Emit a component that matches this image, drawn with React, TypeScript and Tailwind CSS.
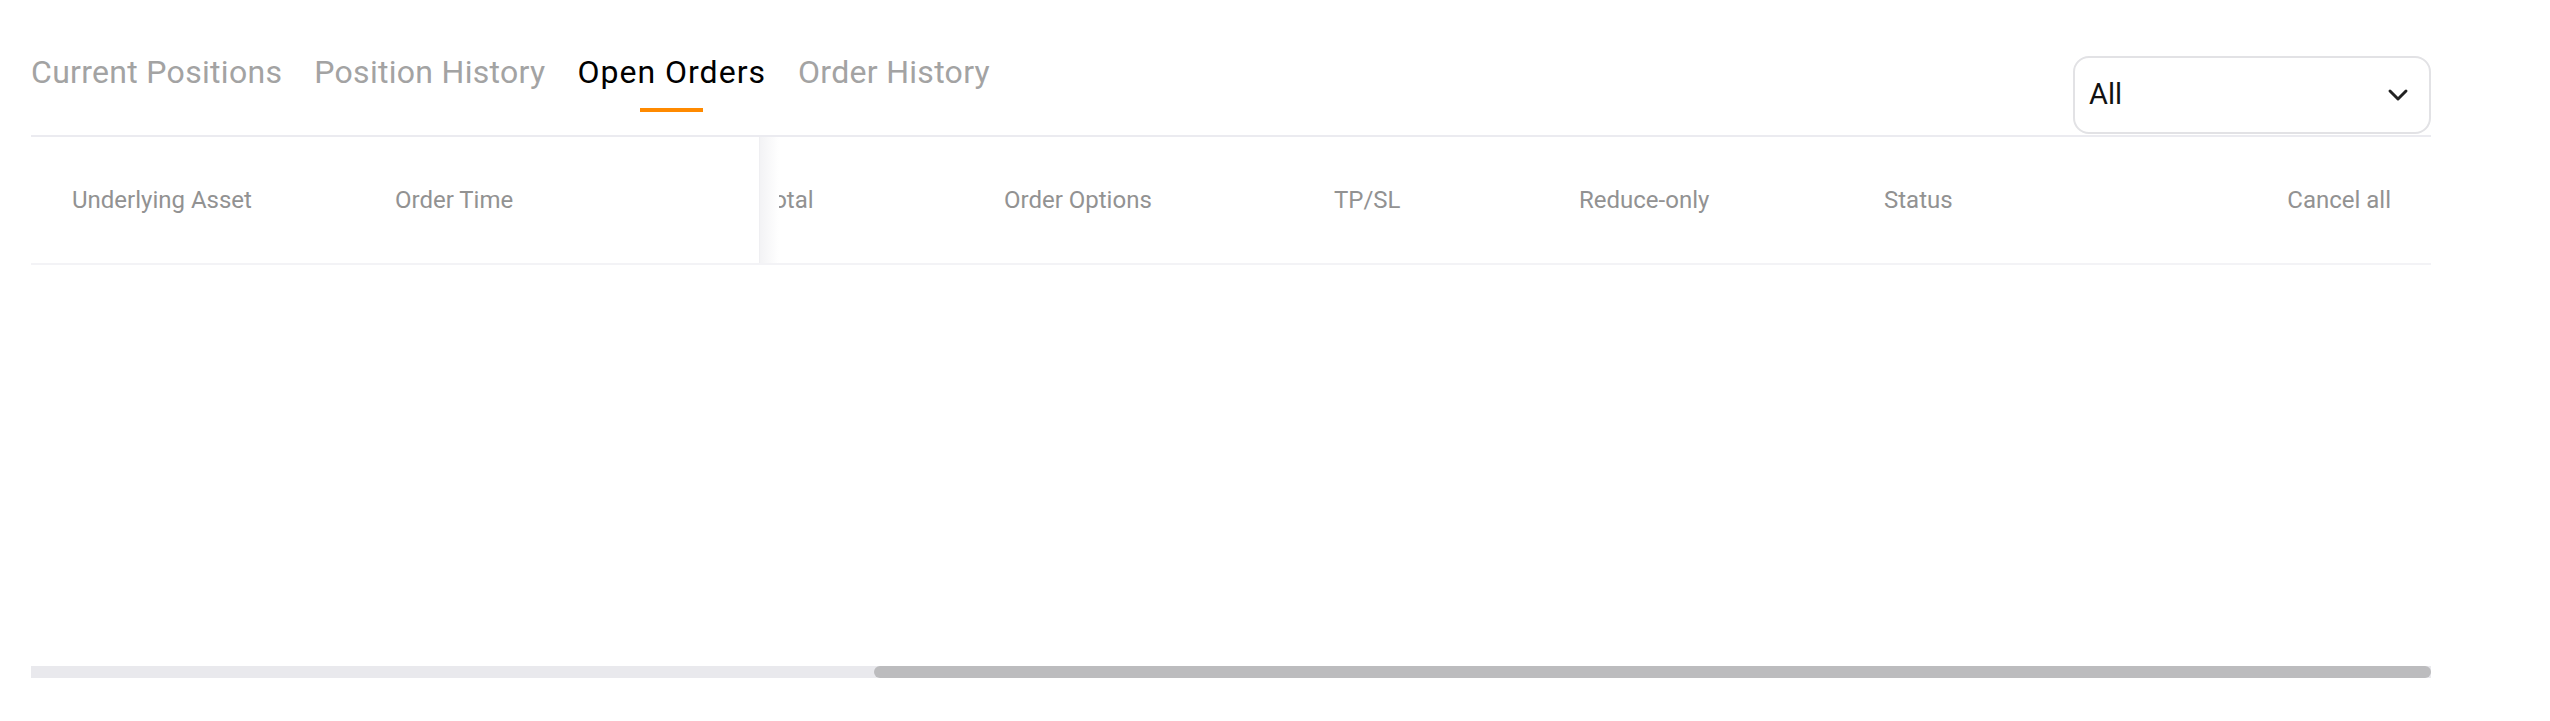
import React from 'react';
import { ChevronDown } from 'lucide-react';

const tabs = ['Current Positions', 'Position History', 'Open Orders', 'Order History'];

// scrolled part of the header, widths are column widths (text start to next text start)
const scrollCols = [
  { label: 'Total', w: 'w-[244px]' },
  { label: 'Order Options', w: 'w-[330px]' },
  { label: 'TP/SL', w: 'w-[245px]' },
  { label: 'Reduce-only', w: 'w-[305px]' },
];

export default function App() {
  const active = 'Open Orders';

  return (
    <div className="w-[2550px] h-[721px] bg-white overflow-hidden" style={{ fontFamily: 'Roboto, "Noto Sans", sans-serif' }}>
      <div className="ml-[31px] w-[2400px] flex flex-col">
        {/* Tabs + filter */}
        <div className="h-[135px] flex justify-between">
          <div className="flex gap-[32px] pt-[52px]">
            {tabs.map((tab) => {
              const isActive = tab === active;
              return (
                <div key={tab} className="flex flex-col items-center">
                  <span
                    className={`text-[32px] leading-[40px] ${
                      isActive ? 'text-black tracking-[1px]' : 'text-[#a3a3a3] tracking-[0.3px]'
                    }`}
                  >
                    {tab}
                  </span>
                  {isActive && <span className="mt-[16px] w-[63px] h-[4px] bg-[#ff8a00]" />}
                </div>
              );
            })}
          </div>
          <div className="self-end mb-[1px] w-[358px] h-[78px] border-2 border-[#e2e2e5] rounded-[16px] flex items-center justify-between pl-[14px] pr-[15px]">
            <span className="text-[29px] text-[#111]">All</span>
            <ChevronDown size={32} strokeWidth={2.2} className="text-[#222]" />
          </div>
        </div>
        <div className="h-[2px] bg-[#ebebf0]" />

        {/* Header row */}
        <div className="h-[128px] border-b-2 border-[#f3f3f6] flex text-[24px] text-[#929292]">
          <div className="w-[748px] shrink-0 flex items-center">
            <div className="w-[728px] h-full flex items-center pl-[41px]">
              <span className="w-[323px]">Underlying Asset</span>
              <span>Order Time</span>
            </div>
            <div className="w-[20px] h-full border-l border-[#efeff2] bg-gradient-to-r from-[#f3f3f5] to-white" />
          </div>
          <div className="flex-1 overflow-hidden flex items-center">
            <div className="flex items-center -ml-[19px] flex-1">
              {scrollCols.map((c) => (
                <span key={c.label} className={`${c.w} shrink-0`}>
                  {c.label}
                </span>
              ))}
              <span className="flex-1">Status</span>
              <span className="pr-[40px]">Cancel all</span>
            </div>
          </div>
        </div>

        {/* Empty body */}
        <div className="h-[401px]" />

        {/* Horizontal scrollbar */}
        <div className="h-[12px] bg-[#e9e9ed] flex">
          <div className="ml-[843px] flex-1 h-full rounded-full bg-[#bcbcbe]" />
        </div>
      </div>
    </div>
  );
}
